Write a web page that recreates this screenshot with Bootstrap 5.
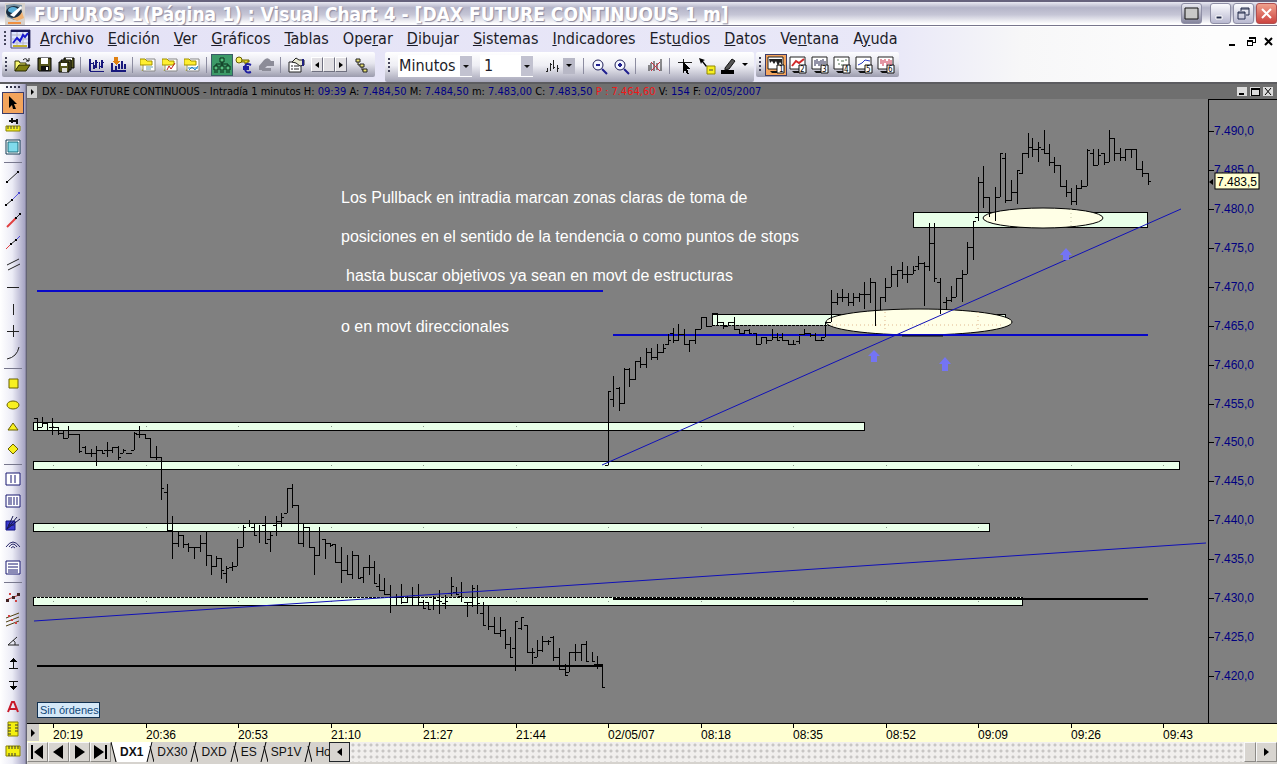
<!DOCTYPE html>
<html lang="es">
<head>
<meta charset="utf-8">
<meta name="viewport" content="width=device-width, initial-scale=1">
<title>FUTUROS 1(Página 1) : Visual Chart 4</title>
<link href="https://cdn.jsdelivr.net/npm/bootstrap@5.3.0/dist/css/bootstrap.min.css" rel="stylesheet">
<style>
  body { font-family: "DejaVu Sans Condensed", "DejaVu Sans", sans-serif; font-stretch: condensed; font-size: 16px; line-height: 20px; color: #111; background: #e9e7ee; }
  button { padding: 0; border: 0; background: none; color: inherit; display: inline-flex; align-items: center; justify-content: center; flex: none; }
  svg { display: block; flex: none; }
  .titlebar { height: 26px; border-top: 2px solid #66627c; border-bottom: 1px solid #77758c; background: linear-gradient(#e9e9f2 0, #b4b4c8 25%, #c6c6d6 55%, #fff 95%); }
  .titlebar h1 { font-size: 19px; line-height: 22px; font-weight: 700; color: #fff; text-shadow: 1px 1px 1px #8d8ca2; }
  .winbtn { width: 21px; height: 21px; border: 1px solid #8f8fa6; border-radius: 3px; background: linear-gradient(#fbfbff, #b9b9d0); color: #222a4a; }
  .winbtn.tray { background: linear-gradient(#e8e8f0, #84849c); }
  .winbtn.quit { background: linear-gradient(#f0a08c, #cc4440); border-color: #b05050; }
  .bars { background: linear-gradient(90deg, #e4e2f6 0, #e9e8f8 70%, #f7f7f8 80%, #fdfdfd 95%); border-bottom: 2px solid #5c5c60; border-top: 1px solid #fff; }
  .menurow { height: 25px; padding-bottom: 2px; }
  .menurow a { color: #1c1c28; text-decoration: none; }
  .toolrow { height: 30px; padding-left: 2px; }
  .toolset { height: 25px; background: linear-gradient(#fdfdff 0, #e6e6ee 45%, #9c9cae 100%); border-radius: 2px; padding: 0 2px 0 3px; }
  .toolset.tall { height: 30px; background: linear-gradient(#fff 0, #eeeef4 45%, #a4a4b6 100%); margin: 0 2px 0 10px; padding-bottom: 2px; }
  .grip { width: 2px; height: 16px; flex: none; background: repeating-linear-gradient(#44445a 0 2px, transparent 2px 4px); }
  .tool { width: 22px; height: 22px; }
  .tool.on { background: #f3a45c; border: 1px solid #3c3c68; }
  .tool.green { background: #3c9a68; border: 1px solid #3c5c68; }
  .vline { width: 1px; height: 16px; background: #8c8ca0; margin: 0 4px 0 3px; flex: none; }
  .combo { position: relative; height: 22px; background: #fff; }
  .combo select { appearance: none; border: 0; background: transparent; width: 100%; height: 22px; padding: 0 12px 0 1px; color: #1c1c28; }
  .combo svg { position: absolute; right: 0; top: 1px; pointer-events: none; }
  .mini { width: 12px; height: 15px; background: #e2e0e4; border: 1px solid; border-color: #fff #707080 #707080 #fff; }
  .palette { width: 27px; background: linear-gradient(90deg, #fff 0, #ececf6 45%, #a6a4c4 92%, #50505c 100%); padding: 2px 0 0 2px; }
  .palette hr { margin: 4px 0 3px 2px; width: 18px; height: 1px; border: 0; background: #77778c; opacity: 1; }
  .palette .handle { width: 14px; height: 2px; margin: 0 0 4px 4px; background: repeating-linear-gradient(90deg, #33334a 0 2px, transparent 2px 4px); }
  .caption { height: 15px; background: #6f6f6f; font-size: 11px; line-height: 15px; color: #000; white-space: nowrap; }
  .caption b { font-weight: 400; color: #000084; }
  .caption .loss, .caption .loss b { color: #f01818; }
  .capbtn { width: 10px; height: 9px; background: #dcdcdc; }
  .desk { background: #808080; min-width: 0; }
  .desk text { font-family: "Liberation Sans", sans-serif; font-size: 12px; }
  .desk .note { font-size: 16px; fill: #fff; }
  .desk .orders { font-size: 11px; fill: #104878; }
  .sheets { height: 22px; background: #d6d3ce; font-family: "Liberation Sans", sans-serif; font-size: 12px; line-height: 20px; }
  .sheets .cell { width: 21px; height: 20px; border: 1px solid; border-color: #f8f8f8 #8c8a86 #8c8a86 #f8f8f8; background: #d8d5d0; }
  .sheets .sheet { height: 20px; padding: 0 3px; }
  .sheets .sheet.active { background: #fff; font-weight: 700; }
  .sheets .cut { width: 17px; overflow: hidden; justify-content: flex-start; }
  .track { height: 20px; background: radial-gradient(#c8c6c4 1px, transparent 2px) 0 0 / 6px 6px, #f1efed; }
</style>
<script src="https://cdn.jsdelivr.net/npm/bootstrap@5.3.0/dist/js/bootstrap.bundle.min.js"></script>
</head>
<body>
<svg width="0" height="0" class="position-absolute" aria-hidden="true">
  <symbol id="folder" viewBox="0 0 16 16"><path d="M1 5V3h5l1 1h6v4H6L2 14" fill="#ffffb0" stroke="#a8a000"/><path d="M6 2h9v12H3V7" fill="#fff" stroke="#888"/><path d="M0 6V2h5l2 2h5v4H0z" fill="#ffef30" stroke="#a09000"/></symbol>
  <symbol id="screen" viewBox="0 0 18 18"><path d="M1 1h15v12H1z" fill="#fff" stroke="#222"/><path d="M3 15h8v2H5z" fill="#111"/><path d="M10 9h7v8h-7z" fill="#fff" stroke="#111"/></symbol>
  <symbol id="caret" viewBox="0 0 12 20"><path d="M0 0h12v20H0z" fill="#c2c2d0"/><path d="M3 9h6l-3 3z" fill="#111"/></symbol>
</svg>

<div class="d-flex flex-column min-vh-100">
  <header class="titlebar d-flex align-items-center">
    <svg width="22" height="22" viewBox="0 0 22 22" class="ms-1"><path d="M1 0h20v22H1z" fill="#d8d2cc"/><path d="M2 2l8-1 8 1-2 12-6 3-7-3z" fill="#7890a0"/><ellipse cx="10" cy="9" rx="8" ry="6" fill="#182c40"/><ellipse cx="9" cy="7" rx="5" ry="3" fill="#5cb0d8"/><path d="M6 12L17 3l1 2-8 9z" fill="#fff"/><path d="M8 15q7 0 10-6l2 6-7 3z" fill="#f0b070"/><path d="M4 20h13" stroke="#f09040" stroke-width="2"/></svg>
    <h1 class="m-0 ps-2 text-nowrap flex-grow-1">FUTUROS 1(Página 1) : Visual Chart 4 - [DAX FUTURE CONTINUOUS 1 m]</h1>
    <button class="winbtn tray me-2" aria-label="Bandeja"><svg width="16" height="16" viewBox="0 0 16 16"><path d="M1 2h13v11H1z" fill="#c8c8c8" stroke="#111"/></svg></button>
    <div class="d-flex" style="gap:2px">
      <button class="winbtn" aria-label="Minimizar"><svg width="15" height="15"><path d="M3 10h6v3H3z" fill="#222a4a" stroke="#fff"/></svg></button>
      <button class="winbtn" aria-label="Restaurar"><svg width="15" height="15"><path d="M5 5V2h8v7h-3M2 6h7v7H2zM2 7h7M5 3h8" fill="none" stroke="#222a4a"/></svg></button>
      <button class="winbtn quit" aria-label="Cerrar"><svg width="15" height="15"><path d="M3 3l9 9M12 3l-9 9" stroke="#fff" stroke-width="2"/></svg></button>
    </div>
  </header>

  <div class="bars">
    <nav class="menurow d-flex align-items-center" aria-label="Menú principal">
      <div class="grip ms-1"></div>
      <svg width="22" height="22" viewBox="0 0 22 22" class="ms-1 me-2"><path d="M1 2h19v18H1z" fill="#dfe6ff" stroke="#484878"/><path d="M1 3h19M19 2v18" stroke="#181858" stroke-width="2"/><path d="M2 7h16M2 11h16M2 15h16M7 4v15M13 4v15" stroke="#b8b8c8"/><path d="M3 15l4-5 3 3 3-6 2 2 3-4" fill="none" stroke="#1818d0" stroke-width="2"/><path d="M3 18h14" stroke="#c0b030" stroke-width="2"/></svg>
      <div class="d-flex flex-grow-1" style="gap:14px">
        <a href="#"><u>A</u>rchivo</a><a href="#"><u>E</u>dición</a><a href="#"><u>V</u>er</a><a href="#"><u>G</u>ráficos</a><a href="#"><u>T</u>ablas</a><a href="#">Ope<u>r</u>ar</a><a href="#"><u>D</u>ibujar</a><a href="#"><u>S</u>istemas</a><a href="#"><u>I</u>ndicadores</a><a href="#">Est<u>u</u>dios</a><a href="#"><u>D</u>atos</a><a href="#">Ve<u>n</u>tana</a><a href="#">A<u>y</u>uda</a>
      </div>
      <div class="d-flex gap-2 me-1 pt-1">
        <button aria-label="Minimizar ventana"><svg width="10" height="12"><path d="M1 10h6" stroke="#000" stroke-width="2"/></svg></button>
        <button aria-label="Restaurar ventana"><svg width="10" height="12" shape-rendering="crispEdges"><path d="M3 4V2h6v5H7M1 5h5v5H1zM1 6h5M3 3h6" fill="none" stroke="#000"/></svg></button>
        <button aria-label="Cerrar ventana"><svg width="9" height="12"><path d="M1 3l7 7M8 3l-7 7" stroke="#000" stroke-width="2"/></svg></button>
      </div>
    </nav>

    <div class="toolrow d-flex align-items-start">
      <div class="toolset d-flex align-items-center flex-shrink-0" role="toolbar" aria-label="Estándar">
        <div class="grip me-1"></div>
        <button class="tool" aria-label="Abrir"><svg width="17" height="16" viewBox="0 0 17 16"><path d="M1 14V4h4l1 2h6v3" fill="#f8f870" stroke="#333300"/><path d="M1 14l4-6h11l-4 6z" fill="#808010" stroke="#222200"/><path d="M9 3q3-3 5 1M15 1v3h-3" fill="none" stroke="#111"/></svg></button>
        <button class="tool" aria-label="Guardar"><svg width="15" height="15" viewBox="0 0 15 15"><path d="M1 1h13v13H2l-1-1z" fill="#585820" stroke="#000"/><path d="M4 1h7v6H4z" fill="#fff"/><path d="M4 9h8v5H4z" fill="#111"/><path d="M9 10h2v3H9z" fill="#fff"/></svg></button>
        <button class="tool" aria-label="Guardar todo"><svg width="17" height="16" viewBox="0 0 17 16"><path d="M6 1h10v10H6z" fill="#585820" stroke="#000"/><path d="M8 1h6v2H8z" fill="#fff"/><path d="M3 3h10v10H3z" fill="#686830" stroke="#000"/><path d="M1 5h10v10H1z" fill="#585820" stroke="#000"/><path d="M3 6h6v3H3z" fill="#fff"/><path d="M4 11h5v4H4z" fill="#ddd"/></svg></button>
        <div class="vline"></div>
        <button class="tool" aria-label="Gráfico"><svg width="17" height="16" viewBox="0 0 17 16" shape-rendering="crispEdges"><path d="M2 2v12h14M5 5v7M3 6h2M8 3v8M8 5h2M11 5v7M11 9h2M14 3v8M14 5h2M6 8v4" fill="none" stroke="#18187c"/><path d="M2 2v12M8 3v8M14 3v8" stroke="#18187c" stroke-width="2"/></svg></button>
        <button class="tool" aria-label="Nuevo sistema"><svg width="17" height="16" viewBox="0 0 17 16" shape-rendering="crispEdges"><path d="M2 6v8h14M6 9v4M9 7v5M12 4v8M15 7v5" fill="none" stroke="#18187c" stroke-width="2"/><path d="M4 0h4v4h2L6 8 2 4h2z" fill="#e08010"/></svg></button>
        <div class="vline"></div>
        <button class="tool" aria-label="Carpeta"><svg width="16" height="16"><use href="#folder"/><path d="M6 10h7M6 12h5" stroke="#68a0b0"/></svg></button>
        <button class="tool" aria-label="Carpeta de gráficos"><svg width="16" height="16"><use href="#folder"/><path d="M5 13l2-4 2 3 4-6" fill="none" stroke="#c02020"/></svg></button>
        <button class="tool" aria-label="Carpeta de tablas"><svg width="16" height="16"><use href="#folder"/><path d="M4 11h10M5 13l3-3 3 3 3-4" fill="none" stroke="#2888c8"/></svg></button>
        <div class="vline"></div>
        <button class="tool green" aria-label="Conexión"><svg width="18" height="18" viewBox="0 0 18 18"><path d="M7 2h4v4H7zM1 10h4v4H1zM7 10h4v4H7zM13 10h4v4h-4z" fill="#58c080" stroke="#082c18"/><path d="M9 6v4M3 10V8h12v2M1 16h4M7 16h4M13 16h4" stroke="#082c18" fill="none"/></svg></button>
        <button class="tool" aria-label="Cuentas"><svg width="18" height="18" viewBox="0 0 18 18"><path d="M6 4h8v2h-2v2h-2V6H6" fill="#e8d820" stroke="#686000"/><circle cx="4" cy="4" r="3" fill="#f8f060" stroke="#686000"/><path d="M16 9q-6-3-6 3t6 4M8 11h6M8 13h6" fill="none" stroke="#2020a0" stroke-width="2"/></svg></button>
        <button class="tool" aria-label="Desconectar" disabled><svg width="17" height="16" viewBox="0 0 17 16"><path d="M1 9l5-6q4-4 7 1h3v5H9l-4 4H1zM4 11h9v3H4z" fill="#8c8c98"/></svg></button>
        <div class="vline"></div>
        <button class="tool" aria-label="Propiedades"><svg width="17" height="16" viewBox="0 0 17 16"><path d="M1 5h12v10H1z" fill="#fff" stroke="#222"/><path d="M3 9h2M6 9h5M3 12h2M6 12h5" stroke="#222"/><path d="M4 5l4-4 3 2h5v5l-4 1-4-3z" fill="#e8e8d0" stroke="#222"/><path d="M15 2v7" stroke="#202080" stroke-width="2"/></svg></button>
        <div class="d-flex ms-1 me-1">
          <button class="mini" aria-label="Anterior"><svg width="6" height="8"><path d="M5 1v6L1 4z"/></svg></button>
          <span class="mini"></span>
          <button class="mini" aria-label="Siguiente"><svg width="6" height="8"><path d="M1 1v6l4-3z"/></svg></button>
        </div>
        <button class="tool" aria-label="Vincular"><svg width="14" height="16" viewBox="0 0 14 16"><path d="M1 2h4v3H1zM5 7h4v3H5zM8 12h4v3H8zM3 5v3h2M7 10v3h1" fill="#e8e070" stroke="#222"/></svg></button>
      </div>

      <div class="toolset tall d-flex align-items-center flex-shrink-0" role="toolbar" aria-label="Compresión">
        <div class="grip me-2"></div>
        <div class="combo" style="width:74px"><select aria-label="Unidad"><option>Minutos</option></select><svg width="12" height="20"><use href="#caret"/></svg></div>
        <div class="combo ms-2" style="width:53px"><select aria-label="Compresión" class="ps-1"><option>1</option></select><svg width="12" height="20"><use href="#caret"/></svg></div>
        <button class="tool ms-2" aria-label="Representación"><svg width="14" height="14" shape-rendering="crispEdges"><path d="M2 9v4M1 12h2M5 4v8M5 5h2M8 1v9M8 8h2M12 6v7M12 9h2" stroke="#222"/></svg></button>
        <button aria-label="Más representaciones"><svg width="12" height="16"><path d="M0 0h12v16H0z" fill="#b8b8c6"/><path d="M3 6h6l-3 3z"/></svg></button>
        <div class="vline ms-2"></div>
        <button class="tool" aria-label="Alejar"><svg width="17" height="17"><circle cx="7" cy="7" r="5" fill="#f4f6ff" stroke="#202058"/><path d="M5 7h4M11 11l5 5" stroke="#202090" stroke-width="2"/></svg></button>
        <button class="tool" aria-label="Acercar"><svg width="17" height="17"><circle cx="7" cy="7" r="5" fill="#f4f6ff" stroke="#202058"/><path d="M5 7h4M7 5v4M11 11l5 5" stroke="#202090" stroke-width="2"/></svg></button>
        <div class="vline"></div>
        <button class="tool ms-1" aria-label="Quitar indicadores"><svg width="17" height="16"><path d="M2 7v6M4 5v7M7 3v10M10 5v7M14 1v12" stroke="#222"/><path d="M4 4l9 9M13 4l-9 9" stroke="#c83040"/></svg></button>
        <div class="vline"></div>
        <button class="tool" aria-label="Cursor"><svg width="17" height="17" shape-rendering="crispEdges"><path d="M1 4h14M6 1v14" stroke="#222"/><path d="M6 4l8 7h-4l2 5h-2l-2-4-2 2z"/></svg></button>
        <button class="tool" aria-label="Etiqueta"><svg width="17" height="17"><path d="M0 0l6 2-2 1 4 5-1 1-4-5-1 2z"/><path d="M8 8h8v8H8z" fill="#f8f020" stroke="#908800"/><path d="M10 12h4" stroke="#444"/></svg></button>
        <button class="tool" aria-label="Color de trazo"><svg width="18" height="17"><path d="M1 12h13v4H1z"/><path d="M5 10l7-9 3 2-6 8-4 1z" fill="#555" stroke="#111"/></svg></button>
        <button aria-label="Más colores"><svg width="12" height="16"><path d="M2 5h6L5 8z"/></svg></button>
      </div>

      <div class="toolset d-flex align-items-center flex-shrink-0" role="toolbar" aria-label="Pantallas">
        <div class="grip me-1"></div>
        <button class="tool on" aria-label="Pantalla 1"><svg width="18" height="18"><use href="#screen"/><path d="M2 3h13v6l-2-3-2 4-2-5-2 3-2-3-2 2z" fill="#222"/><text x="12" y="16" font-size="8">1</text></svg></button>
        <button class="tool" aria-label="Pantalla 2"><svg width="18" height="18"><use href="#screen"/><path d="M3 10l4-5 3 2 5-4" fill="none" stroke="#d02828" stroke-width="2"/><text x="11" y="16" font-size="8">2</text></svg></button>
        <button class="tool" aria-label="Pantalla 3"><svg width="18" height="18"><use href="#screen"/><path d="M4 4v6M6 3v5M8 5v5M10 4v5M12 3v5M14 5v3" stroke="#282850"/><text x="11" y="16" font-size="8">3</text></svg></button>
        <button class="tool" aria-label="Pantalla 4"><svg width="18" height="18"><use href="#screen"/><path d="M4 4h2M8 5h3M5 8h2M12 4h2M8 9h2" stroke="#507050"/><text x="11" y="16" font-size="8">4</text></svg></button>
        <button class="tool" aria-label="Pantalla 5"><svg width="18" height="18"><use href="#screen"/><path d="M3 9l4-2 3-3 5 1" fill="none" stroke="#2838c0"/><text x="11" y="16" font-size="8">5</text></svg></button>
        <button class="tool" aria-label="Pantalla 6"><svg width="18" height="18"><use href="#screen"/><path d="M4 3v5M6 4v6M8 3v4M10 5v4M12 3v5M14 4v5" stroke="#c83048"/><text x="11" y="16" font-size="8">6</text></svg></button>
      </div>
    </div>
  </div>

  <main class="d-flex flex-grow-1">
    <aside class="palette d-flex flex-column flex-shrink-0" role="toolbar" aria-label="Dibujo">
      <div class="handle"></div>
      <button class="tool on" aria-label="Seleccionar"><svg width="16" height="16"><path d="M4 1l8 8H9l2 5H8L7 10l-3 3z"/></svg></button>
      <button class="tool" aria-label="Fijar regla"><svg width="16" height="16"><path d="M4 4h9M7 1v5M12 2v5" stroke="#111" stroke-width="2"/><path d="M1 9h14v5H1z" fill="#f4f020" stroke="#888000"/><path d="M3 9v3M6 9v3M9 9v3M12 9v3" stroke="#444"/></svg></button>
      <button class="tool" aria-label="Ventana"><svg width="16" height="16"><path d="M1 1h14v14H1z" fill="#fff" stroke="#103850"/><path d="M3 3h10v10H3z" fill="#80dcec" stroke="#186878"/></svg></button>
      <hr>
      <button class="tool" aria-label="Segmento"><svg width="16" height="16"><path d="M2 13L13 3" stroke="#222"/><path d="M1 12h2v2H1zM12 2h2v2h-2z"/></svg></button>
      <button class="tool" aria-label="Semirrecta"><svg width="16" height="16"><path d="M1 14l6-5" stroke="#222"/><path d="M6 10l8-8" stroke="#5858e0"/><path d="M0 13h2v2H0zM6 8h2v2H6z"/><path d="M13 1h2v2h-2z" fill="#4848d0"/></svg></button>
      <button class="tool" aria-label="Prolongación"><svg width="16" height="16"><path d="M2 14l9-9" stroke="#e04040" stroke-width="2"/><path d="M10 6l5-5" stroke="#222"/><path d="M10 4h2v2h-2zM14 0h2v2h-2z"/></svg></button>
      <button class="tool" aria-label="Recta"><svg width="16" height="16"><path d="M1 14l5-5" stroke="#e04040"/><path d="M6 9l5-4" stroke="#222"/><path d="M10 6l5-5" stroke="#4848e0"/><path d="M5 8h2v2H5zM10 4h2v2h-2z"/></svg></button>
      <button class="tool" aria-label="Paralelas"><svg width="16" height="16"><path d="M2 8l12-6M3 13l12-6" stroke="#222"/></svg></button>
      <button class="tool" aria-label="Horizontal"><svg width="16" height="16" shape-rendering="crispEdges"><path d="M2 8h12" stroke="#222"/></svg></button>
      <button class="tool" aria-label="Vertical"><svg width="16" height="16" shape-rendering="crispEdges"><path d="M8 3v11" stroke="#222"/></svg></button>
      <button class="tool" aria-label="Cruz"><svg width="16" height="16" shape-rendering="crispEdges"><path d="M2 8h12M8 2v12" stroke="#222"/></svg></button>
      <button class="tool" aria-label="Curva"><svg width="16" height="16"><path d="M2 14q10-2 12-12" fill="none" stroke="#222"/></svg></button>
      <hr>
      <button class="tool" aria-label="Rectángulo"><svg width="16" height="16"><path d="M4 4h9v9H4z" fill="#f8f020" stroke="#686000"/></svg></button>
      <button class="tool" aria-label="Elipse"><svg width="16" height="16"><ellipse cx="8" cy="8" rx="6" ry="4" fill="#f8f020" stroke="#686000"/></svg></button>
      <button class="tool" aria-label="Triángulo"><svg width="16" height="16"><path d="M8 4l5 7H3z" fill="#f8f020" stroke="#686000"/></svg></button>
      <button class="tool" aria-label="Rombo"><svg width="16" height="16"><path d="M8 3l5 5-5 5-5-5z" fill="#f8f020" stroke="#686000"/></svg></button>
      <hr>
      <button class="tool" aria-label="Ciclos"><svg width="16" height="16"><path d="M1 2h14v12H1zM6 4v8M10 4v8" fill="#fff" stroke="#181870"/></svg></button>
      <button class="tool" aria-label="Fibonacci temporal"><svg width="16" height="16"><path d="M1 2h14v12H1zM4 4v8M6 4v8M9 4v8M12 4v8" fill="#fff" stroke="#181870"/></svg></button>
      <button class="tool" aria-label="Abanico"><svg width="16" height="16"><path d="M1 6h9v9H1z" fill="#3838d0" stroke="#101080"/><path d="M2 14L8 1M2 14l10-12M2 14L15 4M3 10h6" stroke="#181850"/></svg></button>
      <button class="tool" aria-label="Arcos"><svg width="16" height="16"><path d="M1 10q7-10 14 0M4 10q4-6 8 0M6 11q2-3 4 0" fill="none" stroke="#282868"/></svg></button>
      <button class="tool" aria-label="Retrocesos"><svg width="16" height="16"><path d="M1 2h14v13H1zM3 5h10M3 8h10M3 11h10M3 13h10" fill="#fff" stroke="#181870"/></svg></button>
      <hr>
      <button class="tool" aria-label="Regresión"><svg width="16" height="16"><path d="M1 11l13-5" stroke="#c03030"/><path d="M1 10h3v3H1zM7 7h3v3H7zM12 4h3v3h-3z" fill="#402020"/><path d="M4 4h2v2H4zM10 11h2v2h-2z" fill="#d04040"/></svg></button>
      <button class="tool" aria-label="Canal de regresión"><svg width="16" height="16"><path d="M1 7l13-5M1 11l13-5M1 15l13-5" stroke="#504010"/><path d="M3 4h2v2H3zM10 11h2v2h-2zM6 8h2v2H6z" fill="#d04040"/></svg></button>
      <button class="tool" aria-label="Ángulo"><svg width="16" height="16"><path d="M12 4L3 12h11M8 7q3 2 2 5" fill="none" stroke="#222"/></svg></button>
      <button class="tool" aria-label="Soporte"><svg width="16" height="16" shape-rendering="crispEdges"><path d="M4 13h9M8 4v9" stroke="#111"/><path d="M8 3l4 4H4z"/></svg></button>
      <button class="tool" aria-label="Resistencia"><svg width="16" height="16" shape-rendering="crispEdges"><path d="M4 4h9M8 4v9" stroke="#111"/><path d="M8 13l4-4H4z"/></svg></button>
      <button class="tool" aria-label="Texto"><svg width="16" height="16"><path d="M3 13L7 3h2l4 10M5 10h6" fill="none" stroke="#c81828" stroke-width="2"/></svg></button>
      <button class="tool" aria-label="Regla vertical"><svg width="16" height="16"><path d="M3 1h10v14H3z" fill="#f4f010" stroke="#888000"/><path d="M3 4h3M3 7h3M3 10h3M3 13h3M10 4h3M10 7h3M10 10h3" stroke="#333"/></svg></button>
      <button class="tool" aria-label="Regla horizontal"><svg width="16" height="16"><path d="M1 3h14v10H1z" fill="#f4f010" stroke="#888000"/><path d="M4 3v3M7 3v3M10 3v3M13 3v3M4 10v3M7 10v3M10 10v3" stroke="#333"/></svg></button>
    </aside>

    <section class="desk flex-grow-1 d-flex flex-column">
      <div class="caption d-flex align-items-center">
        <svg width="11" height="14" class="me-1"><path d="M0 1h10v12H0z" fill="#d0d0d0"/><path d="M4 4v6l3-3z"/></svg>
        <span class="flex-grow-1">DX - DAX FUTURE CONTINUOUS - Intradía 1 minutos H: <b>09:39</b> A: <b>7.484,50</b> M: <b>7.484,50</b> m: <b>7.483,00</b> C: <b>7.483,50</b> <span class="loss">P : <b>7.464,60</b></span> V: <b>154</b> F: <b>02/05/2007</b></span>
        <div class="d-flex me-1" style="gap:3px">
          <button class="capbtn" aria-label="Minimizar gráfico"><svg width="10" height="9"><path d="M2 7h5" stroke="#000" stroke-width="2"/></svg></button>
          <button class="capbtn" aria-label="Maximizar gráfico"><svg width="10" height="9" shape-rendering="crispEdges"><path d="M1 1h8v7H1zM1 2h8" fill="none" stroke="#000"/></svg></button>
          <button class="capbtn" aria-label="Cerrar gráfico"><svg width="10" height="9"><path d="M2 1l6 7M8 1L2 8" stroke="#000"/></svg></button>
        </div>
      </div>

      <svg id="chart" class="w-100 h-auto" viewBox="27 99 1250 643" role="img" aria-label="Gráfico intradía">
        <rect x="27" y="99" width="1250" height="624" fill="#808080"/>
        <g fill="#e9ffe9" stroke="#000" shape-rendering="crispEdges">
          <path d="M33 422h831v8H33zM33 461h1146v8H33zM33 523h956v8H33zM913 212h234v15H913z"/>
          <path d="M33 597h989v8H33zM712 314h293v11H712z" stroke="none"/>
          <path d="M33 605h989v-8M33 597v8M712 325v-11h293v11" fill="none"/>
          <path d="M33 597h989M712 325h293" fill="none" stroke-dasharray="3 1"/>
        </g>
        <g id="dots" fill="#889888"></g>
        <g fill="#ffffe6" stroke="#000">
          <ellipse cx="919" cy="322" rx="93" ry="13"/><ellipse cx="1043" cy="218" rx="60" ry="10"/>
        </g>
        <path d="M832 325h172M885 312v20M978 312v20" stroke="#e0b890" stroke-dasharray="1 3"/>
        <path d="M1071 209v18" stroke="#c8c8a8" stroke-dasharray="1 3"/>
        <g stroke-width="2" shape-rendering="crispEdges">
          <path d="M37 291h566M613 335h535" stroke="#0808c8"/>
          <path d="M37 666h566M613 599h535" stroke="#000"/>
        </g>
        <path d="M902 336h41" stroke="#000"/>
        <path id="ohlc" fill="none" stroke="#000" shape-rendering="crispEdges"/>
        <path d="M34 621L1206 543M602 465L1181 209" stroke="#1010b8" fill="none"/>
        <g fill="#7474f4">
          <path d="M874 350l6 6h-3v6h-6v-6h-3zM945 357l6 7h-3v7h-6v-7h-3zM1066 248l6 7h-3v5h-6v-5h-3z"/>
        </g>
        <g>
          <text class="note" x="341" y="203">Los Pullback en intradia marcan zonas claras de toma de</text>
          <text class="note" x="341" y="242">posiciones en el sentido de la tendencia o como puntos de stops</text>
          <text class="note" x="346" y="281">hasta buscar objetivos ya sean en movt de estructuras</text>
          <text class="note" x="341" y="332">o en movt direccionales</text>
        </g>
        <path d="M1208 723V99h69" fill="none" stroke="#000" shape-rendering="crispEdges"/>
        <g id="prices" fill="#000080"></g>
        <rect x="1215" y="173" width="44" height="16" fill="#ffffd0" stroke="#000"/>
        <text x="1217" y="186">7.483,5</text>
        <path d="M1209 182l4-3v6z"/>
        <rect x="37" y="702" width="62" height="15" fill="#d4e8f8" stroke="#103050" shape-rendering="crispEdges"/>
        <text class="orders" x="40" y="714">Sin órdenes</text>
        <rect x="27" y="723" width="1250" height="19" fill="#ffffd2"/>
        <path d="M27 723h1250" stroke="#000" shape-rendering="crispEdges"/>
        <rect x="27" y="724" width="12" height="17" fill="#d0ceca"/><path d="M31 729v8l4-4z"/>
        <g id="times"></g>
      </svg>

      <div class="sheets d-flex flex-grow-1 align-items-start">
        <button class="cell" aria-label="Primera"><svg width="15" height="16"><path d="M1 1h2v14H1zM13 1v14L4 8z"/></svg></button>
        <button class="cell" aria-label="Previa"><svg width="15" height="16"><path d="M12 1v14L2 8z"/></svg></button>
        <button class="cell" aria-label="Próxima"><svg width="15" height="16"><path d="M3 1v14l10-7z"/></svg></button>
        <button class="cell" aria-label="Última"><svg width="15" height="16"><path d="M1 1v14l10-7zM12 1h2v14h-2z"/></svg></button>
        <svg width="6" height="20"><path d="M0 0h6v20z" fill="#fff"/><path d="M0 0l5 20" stroke="#000"/></svg>
        <button class="sheet active">DX1</button>
        <svg width="8" height="20"><path d="M0 0h7L1 20H0z" fill="#fff"/><path d="M6 0L1 20M4 4l4 16" stroke="#000"/></svg>
        <button class="sheet">DX30</button>
        <svg width="8" height="20"><path d="M6 0L1 20M4 4l4 16" stroke="#000"/></svg>
        <button class="sheet">DXD</button>
        <svg width="8" height="20"><path d="M6 0L1 20M4 4l4 16" stroke="#000"/></svg>
        <button class="sheet">ES</button>
        <svg width="8" height="20"><path d="M6 0L1 20M4 4l4 16" stroke="#000"/></svg>
        <button class="sheet">SP1V</button>
        <svg width="8" height="20"><path d="M6 0L1 20M4 4l4 16" stroke="#000"/></svg>
        <button class="sheet cut">Ho</button>
        <button class="cell border-dark" aria-label="Desplazar a la izquierda"><svg width="8" height="10"><path d="M6 1v8L1 5z"/></svg></button>
        <div class="track flex-grow-1"></div>
        <span class="cell" style="width:12px"></span>
        <button class="cell" aria-label="Desplazar a la derecha"><svg width="8" height="10"><path d="M1 1v8l5-4z"/></svg></button>
      </div>
    </section>
  </main>
</div>

<script>
// Each session stretch: origin in chart units, then bars as [x, high, low, open, close] in thirds of a unit.
// A null open or close has no tick on that side.
const n = null;
const sessions = [
  { x: 30, y: 400, bars: [
    [20,55,90,55,80],[35,50,82,80,68],[52,68,90,68,90],[67,55,105,80,80],[84,80,105,80,98],[100,92,115,98,115],[115,78,115,115,102],[132,102,105,102,102],[148,102,160,102,152],[165,138,160,140,160],[182,148,172,160,160],[199,138,197,160,150],[215,150,160,150,160],[232,125,172,150,150],[247,140,160,150,140],[263,138,180,140,172],[280,148,160,160,150],[296,158,162,160,160],[313,95,150,150,98],[328,78,115,102,102],[345,102,115,102,115],[361,115,172,115,172],[379,138,180,172,172],[394,172,300,172,265],[410,252,390,275,390],[427,348,478,390,430],[443,397,440,430,405],[460,405,443,405,432],[475,430,455,432,440],[493,440,478,440,440],[509,405,455,440,430],[527,397,498,430,465],[542,465,525,465,498],[557,468,500,498,475],[573,475,538,475,510],[589,498,548,520,505],[606,487,512,500,498],[622,418,498,498,440],[640,375,442,440,380],[656,360,382,n,n],[673,370,405,382,405],[688,375,430,n,n],[704,348,430,375,428],[721,397,455,418,405],[737,348,407,375,363],[754,338,382,363,350],[770,265,340,338,265],[787,252,325,265,315],[803,315,430,315,430],[820,372,442,430,382],[836,382,443,382,442],[851,442,525,442,465],[868,382,467,465,n],[884,418,478,418,430] ] },
  { x: 300, y: 470, bars: [
    [90,220,232,220,225],[106,222,277,222,277],[124,230,340,277,300],[140,255,315,300,313],[157,242,327,313,255],[173,255,327,255,325],[190,290,340,320,290],[206,255,315,290,290],[221,272,338,290,338],[238,312,360,348,360],[253,325,373,360,373],[271,345,430,373,380],[287,373,407,380,380],[304,343,403,380,395],[320,378,398,395,380],[337,350,405,380,375],[353,343,405,380,395],[369,390,418,395,415],[385,395,418,395,418],[400,378,420,n,385],[418,360,432,390,393],[434,375,418,400,392],[452,320,377,370,347],[467,350,375,365,372],[484,337,395,378,n],[500,395,440,395,395],[515,345,410,395,355],[532,345,432,n,400],[548,395,467,430,465],[565,407,480,n,467],[581,440,488,468,488],[599,440,502,488,480],[614,478,538,480,522],[631,500,560,522,560],[646,453,603,535,453],[662,442,480,475,442],[680,465,548,465,547],[695,535,582,547,547],[712,510,560,560,540],[727,498,545,540,512],[744,510,525,512,512],[760,498,572,500,560],[778,533,597,560,597],[794,583,615,597,615],[808,547,605,605,547],[826,522,572,547,547],[842,522,572,547,522],[859,512,572,522,572],[875,545,572,n,572],[892,558,598,583,583],[907,583,652,583,652] ] },
  { x: 590, y: 290, bars: [
    [55,303,525,525,303],[70,257,352,327,n],[88,290,363,293,340],[103,235,342,340,238],[118,235,292,238,268],[135,212,270,268,212],[151,200,235,212,223],[169,175,235,223,187],[184,175,210,187,200],[202,163,210,200,187],[218,162,190,187,175],[235,133,165,163,150],[250,115,160,128,150],[265,103,153,150,133],[283,118,163,133,163],[298,150,185,163,150],[316,118,163,150,118],[333,82,118,118,82],[349,82,107,82,107],[365,70,107,107,70],[382,70,107,70,95],[398,95,118,95,107],[414,95,107,107,95],[431,80,118,95,118],[446,118,133,118,130],[463,120,133,130,120],[478,118,133,120,130],[497,130,163,130,163],[512,140,163,163,140],[528,140,163,140,150],[545,118,150,150,140],[560,130,152,140,150],[577,128,152,140,150],[593,150,163,150,163],[610,150,163,163,163],[626,138,163,152,133],[643,118,135,133,130],[660,130,140,130,135],[676,130,150,135,150],[692,140,153,150,150],[706,95,140,140,95] ] },
  { x: 820, y: 120, bars: [
    [34,510,605,605,545],[50,520,555,545,532],[67,507,545,532,532],[83,520,557,532,545],[100,520,557,545,532],[116,520,545,532,522],[133,487,568,522,522],[149,475,548,522,487],[164,487,617,487,n],[181,532,570,n,532],[196,475,545,532,500],[214,438,500,500,463],[230,450,500,463,450],[247,425,477,450,463],[262,438,488,463,463],[280,438,463,463,450],[295,407,450,438,430],[313,425,557,430,438],[328,308,453,438,370],[343,308,487,370,475],[361,475,582,487,n],[377,530,570,545,540],[394,498,545,540,532],[409,475,532,532,475],[427,450,545,475,463],[442,367,463,463,382],[460,302,420,382,302],[475,170,302,290,185],[490,137,265,185,230],[508,230,290,230,n],[524,200,302,n,230],[541,98,230,230,100],[556,98,250,113,240],[574,180,243,240,215],[590,150,253,215,150],[607,98,162,160,100],[623,40,115,100,80] ] },
  { x: 970, y: 110, bars: [
    [187,83,142,110,118],[205,95,155,118,110],[221,60,130,118,130],[238,103,167,130,155],[253,142,190,155,165],[271,165,230,165,228],[287,210,260,228,247],[304,235,285,247,273],[319,225,285,273,235],[334,210,237,235,228],[352,118,228,228,120],[368,118,165,130,165],[384,118,165,165,135],[401,128,165,130,155],[418,60,155,155,85],[433,85,152,85,130],[450,113,152,130,140],[466,118,152,140,118],[482,118,145,118,118],[499,118,178,118,178],[515,152,200,178,188],[533,188,225,190,213] ] }
];
let d = '';
for (const s of sessions) for (const [x, hi, lo, op, cl] of s.bars) {
  const px = Math.round(s.x + x / 3), y = v => Math.round(s.y + v / 3);
  d += `M${px} ${y(hi)}V${y(lo)}`;
  if (op !== null) d += `M${px - 3} ${y(op)}h3`;
  if (cl !== null) d += `M${px} ${y(cl)}h3`;
}
document.getElementById('ohlc').setAttribute('d', d);

let prices = '';
for (let i = 0; i < 15; i++) {
  const y = Math.round(131 + i * 545 / 14);
  prices += `<path d="M1209 ${y}h5" stroke="#000" shape-rendering="crispEdges"/><text x="1214" y="${y + 4}">7.${490 - i * 5},0</text>`;
}
document.getElementById('prices').innerHTML = prices;

const hours = ['20:19','20:36','20:53','21:10','21:27','21:44','02/05/07','08:18','08:35','08:52','09:09','09:26','09:43'];
let times = '', dots = '';
hours.forEach((h, i) => {
  const x = Math.round(53 + i * 1110 / 12);
  times += `<path d="M${x} 723v5" stroke="#000" shape-rendering="crispEdges"/><text x="${x}" y="739">${h}</text>`;
  [[426, 864], [465, 1180], [527, 989], [601, 1022]].forEach(([y, end]) => { if (x < end) dots += `<rect x="${x}" y="${y}" width="1" height="1"/>`; });
});
document.getElementById('times').innerHTML = times;
document.getElementById('dots').innerHTML = dots;
</script>
</body>
</html>
